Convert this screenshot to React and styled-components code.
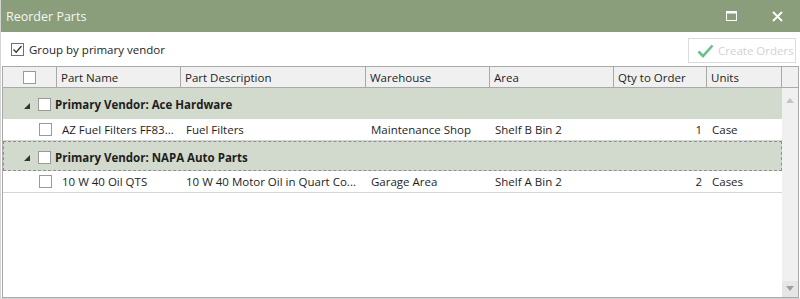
import React from "react";
import styled, { createGlobalStyle } from "styled-components";

const Global = createGlobalStyle`
  html, body { margin: 0; padding: 0; background: #fff; }
  body { font-family: "Open Sans", "Noto Sans", sans-serif; font-size: 11.5px; color: #1e1e1e; }
  * { box-sizing: border-box; }
`;

const Window = styled.div`
  width: 800px;
  height: 299px;
  display: flex;
  flex-direction: column;
  background: #fff;
  border-left: 1px solid #d4d4d4;
  border-bottom: 1px solid #d4d4d4;
  overflow: hidden;
`;

const TitleBar = styled.div`
  height: 32px;
  flex: none;
  background: #8a9e7c;
  display: flex;
  align-items: center;
  padding-left: 6px;
  margin-left: -1px;
  color: #f4f6f2;
`;

const Title = styled.div`
  flex: 1;
  font-size: 12.5px;
`;

const TitleButton = styled.div`
  width: 46px;
  height: 32px;
  display: flex;
  align-items: center;
  justify-content: center;
`;

const Toolbar = styled.div`
  height: 34px;
  flex: none;
  display: flex;
  align-items: center;
  padding: 0 4px 0 10px;
`;

const CheckLabel = styled.label`
  display: flex;
  align-items: center;
  gap: 5px;
  flex: 1;
`;

const Box = styled.span`
  width: 13px;
  height: 13px;
  flex: none;
  border: 1px solid ${(p) => (p.$dark ? "#707070" : "#9a9a9a")};
  background: #fff;
  display: inline-flex;
  align-items: center;
  justify-content: center;
  margin-right: ${(p) => p.$mr || 0}px;
`;

const Button = styled.div`
  width: 108px;
  height: 25px;
  border: 1px solid #dcdcdc;
  display: flex;
  align-items: center;
  gap: 4px;
  padding-left: 8px;
  color: #d2d2d2;
  font-size: 11.5px;
  white-space: nowrap;
  margin-top: 3px;
`;

const cols = "54px 124px 185px 124px 124px 93px 75px 1fr";

const Grid = styled.div`
  flex: 1;
  margin-left: 1px;
  margin-right: 1px;
  border: 1px solid #a9a9a9;
  display: flex;
  flex-direction: column;
  min-height: 0;
`;

const HeaderRow = styled.div`
  display: grid;
  grid-template-columns: ${cols};
  height: 21px;
  flex: none;
  background: #f0f0f0;
  border-bottom: 1px solid #a9a9a9;
`;

const HeaderCell = styled.div`
  display: flex;
  align-items: center;
  justify-content: ${(p) => (p.$center ? "center" : "flex-start")};
  padding-left: ${(p) => (p.$center ? "0" : "4px")};
  border-right: ${(p) => (p.$last ? "none" : "1px solid #a9a9a9")};
`;

const Body = styled.div`
  flex: 1;
  display: flex;
  min-height: 0;
`;

const Rows = styled.div`
  flex: 1;
  display: flex;
  flex-direction: column;
`;

const GroupRow = styled.div`
  height: ${(p) => (p.$focus ? "30px" : "31px")};
  background: #d2dacd;
  display: flex;
  align-items: center;
  padding-left: 20px;
  padding-top: 2px;
  font-weight: 700;
  border: 1px ${(p) => (p.$focus ? "dashed #8f8f8f" : "solid transparent")};
`;

const Arrow = styled.span`
  width: 6px;
  height: 6px;
  display: inline-flex;
  margin-right: 8px;
  margin-top: 2px;
`;

const DataRow = styled.div`
  display: grid;
  grid-template-columns: 54px 124px 185px 124px 124px 93px 1fr;
  height: 22px;
  border-bottom: 1px solid #d6d6d6;
  background: #fff;
`;

const Cell = styled.div`
  display: flex;
  align-items: center;
  padding: 0 5px;
  white-space: nowrap;
  overflow: hidden;
  justify-content: ${(p) => (p.$align ? "flex-end" : "flex-start")};
`;

const ScrollBar = styled.div`
  width: 16px;
  flex: none;
  background: #f0f0f0;
  display: flex;
  flex-direction: column;
  justify-content: space-between;
  align-items: center;
  padding: 4px 0 0;
`;

const ScrollArrow = styled.div`
  width: 16px;
  height: 16px;
  display: flex;
  align-items: center;
  justify-content: center;
  background: ${(p) => (p.$bg ? "#e6e6e6" : "transparent")};
`;

const Check = () => (
  <svg width="11" height="11" viewBox="0 0 11 11">
    <path d="M1.5 5.5 L4.2 8.2 L9.5 2" fill="none" stroke="#333" strokeWidth="1.3" />
  </svg>
);

const GroupArrow = () => (
  <svg width="6" height="6" viewBox="0 0 6 6">
    <path d="M6 0 L6 6 L0 6 Z" fill="#333" />
  </svg>
);

const rows = [
  {
    group: "Primary Vendor: Ace Hardware",
    item: ["AZ Fuel Filters FF83...", "Fuel Filters", "Maintenance Shop", "Shelf B Bin 2", "1", "Case"],
  },
  {
    group: "Primary Vendor: NAPA Auto Parts",
    focus: true,
    item: ["10 W 40 Oil QTS", "10 W 40 Motor Oil in Quart Co...", "Garage Area", "Shelf A Bin 2", "2", "Cases"],
  },
];

export default function App() {
  return (
    <>
      <Global />
      <Window>
        <TitleBar>
          <Title>Reorder Parts</Title>
          <TitleButton>
            <svg width="11" height="10" viewBox="0 0 11 10">
              <rect x="0.5" y="0.5" width="10" height="9" fill="none" stroke="#fff" strokeWidth="1" />
              <rect x="0.5" y="0.5" width="10" height="2" fill="#fff" />
            </svg>
          </TitleButton>
          <TitleButton>
            <svg width="11" height="11" viewBox="0 0 11 11">
              <path d="M1 1 L10 10 M10 1 L1 10" stroke="#fff" strokeWidth="1.8" />
            </svg>
          </TitleButton>
        </TitleBar>
        <Toolbar>
          <CheckLabel>
            <Box $dark>
              <Check />
            </Box>
            Group by primary vendor
          </CheckLabel>
          <Button>
            <svg width="17" height="14" viewBox="0 0 17 14">
              <path d="M1.5 7.5 L6 12 L15.5 1.5" fill="none" stroke="#6cc08a" strokeWidth="2.6" />
            </svg>
            Create Orders
          </Button>
        </Toolbar>
        <Grid>
          <HeaderRow>
            <HeaderCell $center>
              <Box />
            </HeaderCell>
            <HeaderCell>Part Name</HeaderCell>
            <HeaderCell>Part Description</HeaderCell>
            <HeaderCell>Warehouse</HeaderCell>
            <HeaderCell>Area</HeaderCell>
            <HeaderCell>Qty to Order</HeaderCell>
            <HeaderCell>Units</HeaderCell>
            <HeaderCell $last />
          </HeaderRow>
          <Body>
            <Rows>
              {rows.map((r) => (
                <React.Fragment key={r.group}>
                  <GroupRow $focus={r.focus}>
                    <Arrow>
                      <GroupArrow />
                    </Arrow>
                    <Box $mr={4} />
                    {r.group}
                  </GroupRow>
                  <DataRow>
                    <Cell $align="box">
                      <Box />
                    </Cell>
                    <Cell>{r.item[0]}</Cell>
                    <Cell>{r.item[1]}</Cell>
                    <Cell>{r.item[2]}</Cell>
                    <Cell>{r.item[3]}</Cell>
                    <Cell $align="right">{r.item[4]}</Cell>
                    <Cell>{r.item[5]}</Cell>
                  </DataRow>
                </React.Fragment>
              ))}
            </Rows>
            <ScrollBar>
              <ScrollArrow>
                <svg width="8" height="5" viewBox="0 0 8 5">
                  <path d="M0 5 L4 0 L8 5 Z" fill="#c4c4c4" />
                </svg>
              </ScrollArrow>
              <ScrollArrow $bg>
                <svg width="8" height="6" viewBox="0 0 8 6">
                  <path d="M0 0 L8 0 L4 5 Z" fill="#a0a0a0" />
                </svg>
              </ScrollArrow>
            </ScrollBar>
          </Body>
        </Grid>
      </Window>
    </>
  );
}
